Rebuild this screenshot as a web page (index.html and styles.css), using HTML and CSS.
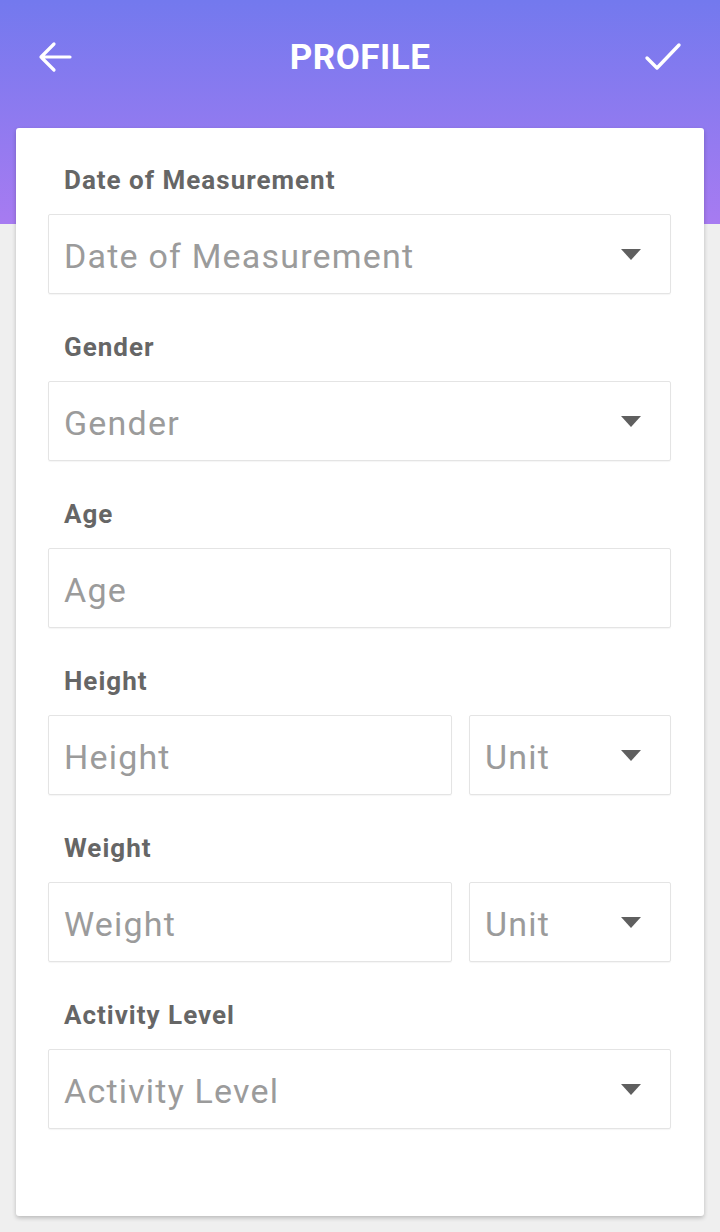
FILE: index.html
```html
<!DOCTYPE html>
<html>
<head>
<meta charset="utf-8">
<link rel="stylesheet" href="styles.css">
</head>
<body>
<div class="page">
  <header class="topbar">
    <span class="icon-btn">
      <svg width="34" height="32" viewBox="0 0 34 32"><path d="M32 16H3M16 3L3 16l13 13" fill="none" stroke="#fff" stroke-width="3.2" stroke-linecap="round" stroke-linejoin="round"/></svg>
    </span>
    <h1 class="title">PROFILE</h1>
    <span class="icon-btn">
      <svg width="38" height="30" viewBox="0 0 38 30"><path d="M3 16l10 10L35 3" fill="none" stroke="#fff" stroke-width="3.4" stroke-linecap="round" stroke-linejoin="round"/></svg>
    </span>
  </header>
  <main class="card">
    <div class="field">
      <div class="label">Date of Measurement</div>
      <div class="input select"><span>Date of Measurement</span><i class="caret"></i></div>
    </div>
    <div class="field">
      <div class="label">Gender</div>
      <div class="input select"><span>Gender</span><i class="caret"></i></div>
    </div>
    <div class="field">
      <div class="label">Age</div>
      <div class="input"><span>Age</span></div>
    </div>
    <div class="field">
      <div class="label">Height</div>
      <div class="pair">
        <div class="input"><span>Height</span></div>
        <div class="input select"><span>Unit</span><i class="caret"></i></div>
      </div>
    </div>
    <div class="field">
      <div class="label">Weight</div>
      <div class="pair">
        <div class="input"><span>Weight</span></div>
        <div class="input select"><span>Unit</span><i class="caret"></i></div>
      </div>
    </div>
    <div class="field">
      <div class="label">Activity Level</div>
      <div class="input select"><span>Activity Level</span><i class="caret"></i></div>
    </div>
  </main>
</div>
</body>
</html>
```
FILE: styles.css
```css
* { box-sizing: border-box; }
html, body { margin: 0; padding: 0; }
body {
  font-family: Roboto, "Liberation Sans", Arial, sans-serif;
  background: #efefef;
}
.page {
  min-height: 1232px;
  background: linear-gradient(180deg, #7379ee 0%, #a77bf1 224px) no-repeat;
  background-size: 100% 224px;
  padding-bottom: 16px;
}
.topbar {
  height: 114px;
  display: flex;
  align-items: center;
  justify-content: space-between;
  padding: 0 38px 0 38px;
}
.icon-btn { display: flex; width: 46px; height: 40px; align-items: center; justify-content: center; }
.icon-btn:first-child { justify-content: flex-start; }
.icon-btn:last-child { justify-content: flex-end; }
.title {
  margin: 0;
  color: #fff;
  font-size: 35px;
  font-weight: 700;
  letter-spacing: 0.5px;
}
.card {
  margin: 14px 16px 0;
  background: #fff;
  border-radius: 3px;
  box-shadow: 0 2px 4px rgba(0,0,0,0.22);
  padding: 37px 33px 87px 32px;
}
.field + .field { margin-top: 38px; }
.label {
  font-size: 26px;
  line-height: 30px;
  font-weight: 700;
  letter-spacing: 1px;
  color: #666;
  padding-left: 16px;
  margin-bottom: 19px;
}
.input {
  height: 80px;
  border: 1px solid #e4e4e4;
  border-radius: 2px;
  box-shadow: 0 1px 1px rgba(0,0,0,0.04);
  display: flex;
  align-items: center;
  justify-content: space-between;
  padding: 0 29px 0 15px;
  font-size: 34px;
  letter-spacing: 1.2px;
  color: #9b9b9b;
}
.input span { line-height: 1; padding-top: 3px; }
.caret {
  width: 0; height: 0;
  border-left: 10px solid transparent;
  border-right: 10px solid transparent;
  border-top: 11px solid #5f5f5f;
  margin-top: 0;
}
.pair {
  display: grid;
  grid-template-columns: 1fr 202px;
  gap: 17px;
}
```
